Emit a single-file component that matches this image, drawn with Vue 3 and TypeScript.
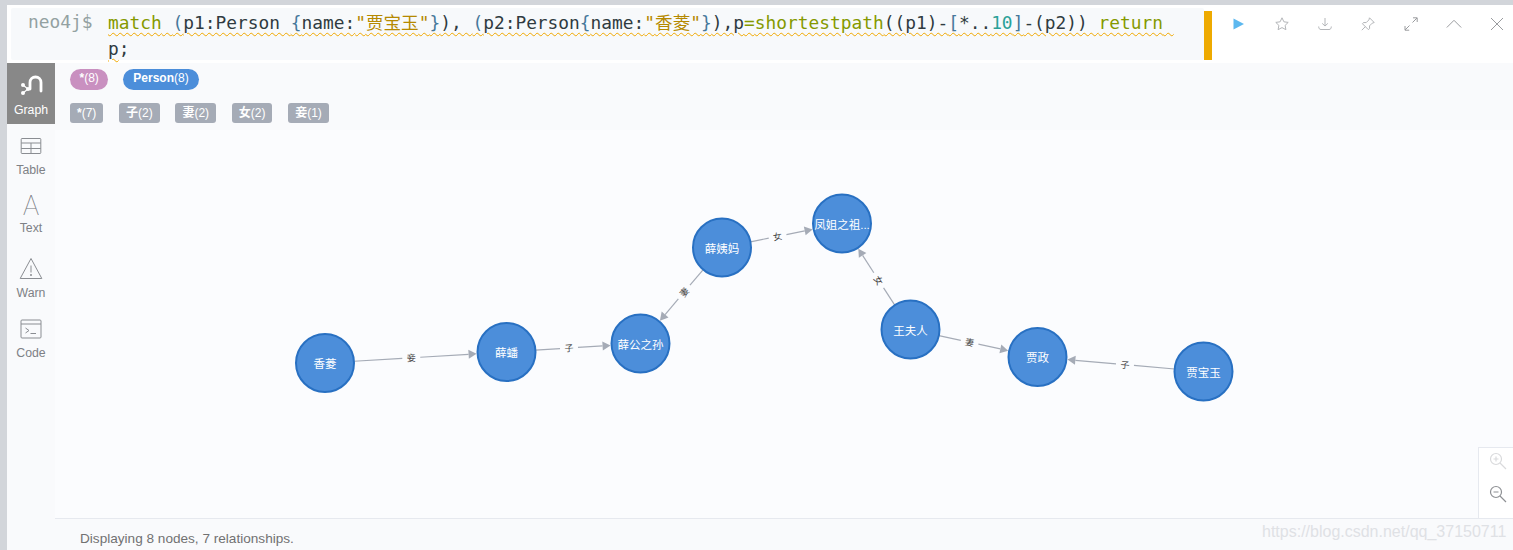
<script setup lang="ts">
interface GNode { name: string; x: number; y: number }
const R = 29
const nodes: GNode[] = [
  { name: '香菱', x: 325, y: 363 },
  { name: '薛蟠', x: 506.5, y: 352 },
  { name: '薛公之孙', x: 640.5, y: 343.5 },
  { name: '薛姨妈', x: 722, y: 247.5 },
  { name: '凤姐之祖...', x: 842, y: 223.5 },
  { name: '王夫人', x: 910.5, y: 329.5 },
  { name: '贾政', x: 1037.5, y: 357 },
  { name: '贾宝玉', x: 1203.5, y: 371.5 },
]
const rels: [number, number, string][] = [
  [0, 1, '妾'], [1, 2, '子'], [3, 2, '妻'], [3, 4, '女'],
  [5, 4, '女'], [5, 6, '妻'], [7, 6, '子'],
]
const edges = rels.map(([a, b, label]) => {
  const s = nodes[a], t = nodes[b]
  const dx = t.x - s.x, dy = t.y - s.y
  const d = Math.hypot(dx, dy)
  const ux = dx / d, uy = dy / d
  const x1 = s.x + ux * R, y1 = s.y + uy * R
  const x2 = t.x - ux * (R + 9), y2 = t.y - uy * (R + 9)
  const tipx = t.x - ux * (R + 1), tipy = t.y - uy * (R + 1)
  const mx = (x1 + x2) / 2, my = (y1 + y2) / 2
  const gap = 9
  let ang = (Math.atan2(dy, dx) * 180) / Math.PI
  if (ang > 90) ang -= 180
  if (ang < -90) ang += 180
  const nx = -uy, ny = ux
  return {
    label, mx, my, ang,
    seg1: `M${x1} ${y1}L${mx - ux * gap} ${my - uy * gap}`,
    seg2: `M${mx + ux * gap} ${my + uy * gap}L${x2} ${y2}`,
    arrow: `${tipx},${tipy} ${x2 + nx * 4.5},${y2 + ny * 4.5} ${x2 - nx * 4.5},${y2 - ny * 4.5}`,
  }
})
const relTags = [
  { n: '*', c: 7 }, { n: '子', c: 2 }, { n: '妻', c: 2 }, { n: '女', c: 2 }, { n: '妾', c: 1 },
]
</script>

<template>
  <div class="page">
    <div class="card">
      <header class="head">
        <div class="editor">
          <div class="prompt">neo4j$</div>
          <div class="code">
            <div class="line squiggle"><span class="kw">match</span> <span class="br">(</span>p1:Person <span class="br">{</span>name:<span class="st">"<span class="cjk">贾宝玉</span>"</span><span class="br">}</span>), <span class="br">(</span>p2:Person<span class="br">{</span>name:<span class="st">"<span class="cjk">香菱</span>"</span><span class="br">}</span>),p<span class="kw">=</span><span class="kw">shortestpath</span>((p1)-<span class="br">[</span>*..<span class="num">10</span><span class="br">]</span>-(p2)) <span class="kw">return</span>&nbsp;</div>
            <div class="line"><span class="squiggle">p</span>;</div>
          </div>
        </div>
        <div class="bar"></div>
        <div class="actions">
          <svg class="act play" viewBox="0 0 16 16"><path d="M2.5 2.5 13 8 2.5 13.5z" /></svg>
          <svg class="act" viewBox="0 0 16 16"><path d="M8 1.8l1.9 4 4.3.6-3.1 3 .8 4.3L8 11.6l-3.9 2.1.8-4.3-3.1-3 4.3-.6z" /></svg>
          <svg class="act" viewBox="0 0 16 16"><path d="M8 2v8M5.2 7.4 8 10l2.8-2.6M1.7 10.500c0 2 .8 3 2.300 3h8c1.500 0 2.300-1 2.300-3" /></svg>
          <svg class="act" viewBox="0 0 16 16"><path d="M9.500 1.800l4.700 4.700-2 .7-2.700 2.700.1 2.700-1.300 1-5.800-5.800 1-1.300 2.700.1 2.700-2.700zM5.300 10.700 1.800 14.200" /></svg>
          <svg class="act exp" viewBox="0 0 16 16"><path d="M9.500 6.500 14 2M10 1.800h4.200V6M6.500 9.500 2 14M2 10v4.200h4.200" /></svg>
          <svg class="act chev" viewBox="0 0 16 16"><path d="M.8 11.500 8 4.300l7.200 7.200" /></svg>
          <svg class="act chev" viewBox="0 0 16 16"><path d="M2 2l12 12M14 2 2 14" /></svg>
        </div>
      </header>

      <div class="body">
        <nav class="side">
          <div class="tab active graph">
            <svg class="ico" viewBox="0 0 24 24">
              <path class="w" d="M11 15V8.500a5.500 5.500 0 0 1 11 0V17" />
              <path class="w thin" d="M4 11l5 4-5 4" />
              <circle cx="4" cy="11" r="2" fill="#fff" /><circle cx="4" cy="19" r="2" fill="#fff" /><circle cx="9" cy="15" r="2" fill="#fff" />
            </svg>
            <span>Graph</span>
          </div>
          <div class="tab">
            <svg class="ico" viewBox="0 0 24 24"><path class="g" d="M3 4.500h18a.8.8 0 0 1 .8.8v13.400a.8.8 0 0 1-.8.8H3a.8.8 0 0 1-.8-.8V5.300A.8.8 0 0 1 3 4.500zM2.200 9h19.600M2.200 14.500h19.600M12 9v10.500" /></svg>
            <span>Table</span>
          </div>
          <div class="tab text-tab">
            <div class="glyph">A</div>
            <span>Text</span>
          </div>
          <div class="tab">
            <svg class="ico" viewBox="0 0 24 24"><path class="g" d="M12 1.500 22.800 21.500H1.200zM12 8.500v7" /><circle cx="12" cy="18" r="1" fill="#8a8d92" /></svg>
            <span>Warn</span>
          </div>
          <div class="tab">
            <svg class="ico" viewBox="0 0 24 24"><path class="g" d="M3 3h18a1 1 0 0 1 1 1v16a1 1 0 0 1-1 1H3a1 1 0 0 1-1-1V4a1 1 0 0 1 1-1zM2 7h20M6.500 11l3.500 2.500L6.500 16M11.500 16.500H17" /></svg>
            <span>Code</span>
          </div>
        </nav>

        <main class="main">
          <section class="legend">
            <div class="row pills">
              <span class="pill all"><b>*</b>(8)</span>
              <span class="pill person"><b>Person</b>(8)</span>
            </div>
            <div class="row tags">
              <span v-for="t in relTags" :key="t.n" class="tag"><b>{{ t.n }}</b>({{ t.c }})</span>
            </div>
          </section>

          <section class="canvas">
            <svg class="graph-svg" viewBox="55 130 1458 388">
              <g v-for="e in edges" :key="e.seg1">
                <path :d="e.seg1" class="edge" />
                <path :d="e.seg2" class="edge" />
                <polygon :points="e.arrow" fill="#a5abb6" />
                <text :transform="`translate(${e.mx} ${e.my}) rotate(${e.ang})`" class="rel" text-anchor="middle" dy="3.500">{{ e.label }}</text>
              </g>
              <g v-for="n in nodes" :key="n.name">
                <circle :cx="n.x" :cy="n.y" :r="R" class="node" />
                <text :x="n.x" :y="n.y + 5" class="name" text-anchor="middle">{{ n.name }}</text>
              </g>
            </svg>
            <div class="zoom">
              <svg class="z faded" viewBox="0 0 18 18"><circle cx="7" cy="7" r="5.500" /><path d="M11 11l6 6M4.500 7h5M7 4.500v5" /></svg>
              <svg class="z" viewBox="0 0 18 18"><circle cx="7" cy="7" r="5.500" /><path d="M11 11l6 6M4.500 7h5" /></svg>
            </div>
          </section>

          <footer class="foot">Displaying 8 nodes, 7 relationships.</footer>
        </main>
      </div>
    </div>
    <div class="mark">https://blog.csdn.net/qq_37150711</div>
  </div>
</template>

<style>
html, body { margin: 0; padding: 0; overflow: hidden; }
</style>

<style scoped>
.page {
  position: relative;
  width: 1513px;
  height: 550px;
  overflow: hidden;
  box-sizing: border-box;
  padding: 5px 0 0 7px;
  background: #d2d5da;
  font-family: "Liberation Sans", "Noto Sans CJK SC", sans-serif;
}
.card { height: 545px; display: flex; flex-direction: column; background: #fff; }
.head { height: 58px; display: flex; flex: none; }
.editor {
  width: 1193px;
  margin: 3px 0 0 4px;
  height: 52px;
  display: flex;
  background: #f7f9fb;
  border-radius: 2px;
  box-sizing: border-box;
  padding: 0 0 0 17px;
  font-family: "DejaVu Sans Mono", "Noto Sans CJK SC", monospace;
  font-size: 17.85px;
  line-height: 27px;
  color: #2f3b40;
}
.prompt { width: 80px; color: #93a1a1; flex: none; }
.code { flex: 1; white-space: pre; }
.line { height: 27px; }
.squiggle { text-decoration: underline wavy #f0a800 1px; text-underline-offset: 3px; }
.kw { color: #859900; }
.st { color: #b58900; }
.num { color: #2aa198; }
.br { color: #46789a; }
.cjk { font-family: "Noto Sans CJK SC", sans-serif; font-size: 17.6px; }
.bar { width: 8px; height: 49px; margin-top: 6px; background: #eeaa00; flex: none; }
.actions { flex: 1; display: flex; align-items: flex-start; padding: 11px 0 0 19px; gap: 27px; }
.act { width: 16px; height: 16px; fill: none; stroke: #b4b6b9; stroke-width: 1; flex: none; }
.play { fill: #5cb8ef; stroke: none; }
.exp, .chev { stroke: #9a9c9f; }
.body { flex: 1; min-height: 0; display: flex; }
.side { width: 48px; flex: none; background: #f9fafc; }
.tab {
  height: 60px;
  box-sizing: border-box;
  padding-top: 10px;
  display: flex;
  flex-direction: column;
  align-items: center;
  gap: 4px;
  font-size: 12.3px;
  line-height: 16px;
  color: #7e8186;
}
.graph { height: 61px; padding-top: 11px; }
.text-tab { height: 63px; gap: 2px; }
.active { background: #888; color: #fff; }
.ico { width: 24px; height: 24px; flex: none; }
.glyph { height: 24px; font: 100 27px/24px Roboto, "Liberation Serif", serif; color: #75787d; }
.w { fill: none; stroke: #fff; stroke-width: 2.800; stroke-linecap: round; }
.thin { stroke-width: 1.200; }
.g { fill: none; stroke: #8a8d92; stroke-width: 1; }
.main { flex: 1; min-width: 0; display: flex; flex-direction: column; background: #f9fafc; }
.legend { height: 67px; flex: none; box-sizing: border-box; padding: 6px 0 0 15px; }
.row { display: flex; }
.pills { gap: 15px; height: 34px; }
.tags { gap: 15.7px; }
.pill {
  height: 21px;
  padding: 0 10px;
  border-radius: 11px;
  font-size: 12px;
  line-height: 19px;
  color: #fff;
}
.all { background: #c990c0; padding: 0 9.5px; }
.person { background: #4c8eda; }
.tag {
  height: 20px;
  padding: 0 7px;
  border-radius: 3px;
  background: #a5abb6;
  font-size: 12px;
  line-height: 20px;
  color: #fff;
}
.canvas { height: 388px; flex: none; position: relative; background: #fbfcfe; }
.graph-svg { position: absolute; inset: 0; width: 100%; height: 100%; }
.edge { fill: none; stroke: #a5abb6; stroke-width: 1.200; }
.rel { font-size: 9px; fill: #444; }
.node { fill: #4c8eda; stroke: #2870c2; stroke-width: 2; }
.name { font-size: 11.500px; fill: #fff; }
.zoom {
  position: absolute;
  right: 0;
  bottom: 0;
  width: 35px;
  height: 71px;
  background: #fff;
  border: 1px solid #e6e9ef;
  border-width: 1px 0 0 1px;
  display: flex;
  flex-direction: column;
  align-items: center;
  gap: 15px;
  padding: 4px 0 0 3px;
  box-sizing: border-box;
}
.z { width: 18px; height: 18px; fill: none; stroke: #8e9094; stroke-width: 1.200; flex: none; }
.faded { stroke: #d9dadc; }
.foot {
  flex: 1;
  border-top: 1px solid #e6e9ef;
  padding: 12px 0 0 25px;
  font-size: 13.600px;
  line-height: 16px;
  color: #717172;
}
.mark {
  position: absolute;
  left: 1262px;
  top: 523px;
  font-size: 16px;
  line-height: 18px;
  color: #dfe1e5;
  white-space: nowrap;
}
</style>
